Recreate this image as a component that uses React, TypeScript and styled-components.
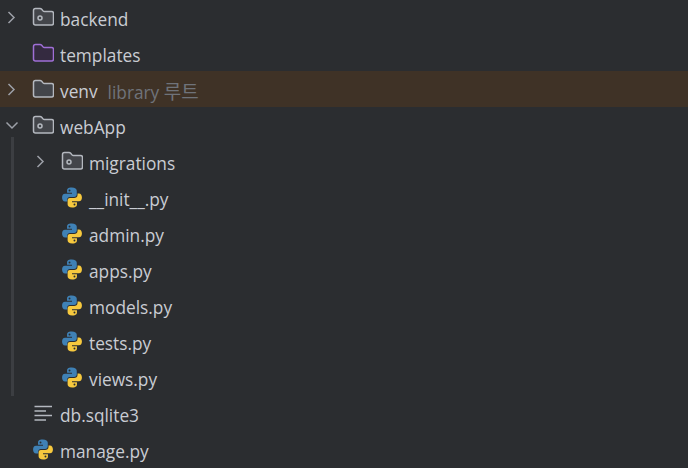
import { createGlobalStyle, styled } from 'styled-components';

const GlobalStyle = createGlobalStyle`
  html, body {
    margin: 0;
    height: 100%;
    overflow: hidden;
    background: #2b2d30;
  }
`;

type IconKind = 'package' | 'folder' | 'templates' | 'python' | 'text';

const Chevron = ({ open }: { open: boolean }) => (
  <StChevron width="16" height="16" viewBox="0 0 16 16" fill="none" stroke="#9da0a8" strokeWidth="1.5">
    {open ? <path d="M3.5 5.5 L9 11 L14.5 5.5" /> : <path d="M5.5 3 L11 8.5 L5.5 14" />}
  </StChevron>
);

const FolderIcon = ({ color, fill, dot }: { color: string; fill: string; dot?: boolean }) => (
  <svg width="22" height="20" viewBox="0 0 22 20" fill="none">
    <path
      d="M1.5 3.5 Q1.5 1.5 3.5 1.5 H8 Q9 1.5 9.7 2.3 L11 3.9 Q11.5 4.5 12.5 4.5 H19.5 Q21.5 4.5 21.5 6.5 V16 Q21.5 18 19.5 18 H3.5 Q1.5 18 1.5 16 Z"
      fill={fill}
      stroke={color}
      strokeWidth="1.5"
    />
    {dot && <circle cx="8" cy="11" r="2" stroke={color} strokeWidth="1.5" />}
  </svg>
);

const PythonIcon = () => (
  <svg width="22" height="21" viewBox="0 0 22 22">
    <path
      d="M10.8 0.6 C6.4 0.6 5.8 2.4 5.8 4 V6 H11 V7 H3.8 C1.6 7 0.6 8.8 0.6 11 C0.6 13.4 1.6 15.2 3.8 15.2 H6 V13.2 C6 11.6 7.2 10.5 8.8 10.5 H13.2 C14.9 10.5 16 9.3 16 7.6 V4 C16 2 14.2 0.6 10.8 0.6 Z"
      fill="#3f81b5"
    />
    <circle cx="8.4" cy="3.6" r="1" fill="#2b2d30" />
    <path
      d="M11.2 21.4 C15.6 21.4 16.2 19.6 16.2 18 V16 H11 V15 H18.2 C20.4 15 21.4 13.2 21.4 11 C21.4 8.6 20.4 6.8 18.2 6.8 H16.8 V8.4 C16.8 10.4 15.2 11.5 13.2 11.5 H8.8 C7.1 11.5 6.4 12.7 6.4 14.4 V18 C6.4 20 7.8 21.4 11.2 21.4 Z"
      fill="#f7c93e"
    />
    <circle cx="13.6" cy="18.4" r="1" fill="#2b2d30" />
  </svg>
);

const TextIcon = () => (
  <svg width="20" height="16" viewBox="0 0 20 16" stroke="#b4b8bf" strokeWidth="1.6">
    <path d="M1.5 1.5 H19 M1.5 6 H13 M1.5 10.5 H19 M1.5 15 H13" />
  </svg>
);

const FileIcon = ({ kind }: { kind: IconKind }) => {
  if (kind === 'python') return <PythonIcon />;
  if (kind === 'text') return <TextIcon />;
  if (kind === 'templates') return <FolderIcon color="#9f6fd6" fill="#342a40" />;
  return <FolderIcon color="#b4b8bf" fill="#43454a" dot={kind === 'package'} />;
};

interface TreeRowProps {
  depth: number;
  name: string;
  icon: IconKind;
  arrow?: 'open' | 'closed';
  hint?: string;
  hintKo?: string;
  excluded?: boolean;
}

const TreeRow = ({ depth, name, icon, arrow, hint, hintKo, excluded }: TreeRowProps) => (
  <StRow $depth={depth} $excluded={excluded}>
    <StArrowSlot>{arrow && <Chevron open={arrow === 'open'} />}</StArrowSlot>
    <StIconSlot>
      <FileIcon kind={icon} />
    </StIconSlot>
    <StName>{name}</StName>
    {hint && (
      <StHint>
        {hint} <StHintKo>{hintKo}</StHintKo>
      </StHint>
    )}
  </StRow>
);

const App = () => (
  <>
    <GlobalStyle />
    <StTree>
      <TreeRow depth={0} name="backend" icon="package" arrow="closed" />
      <TreeRow depth={0} name="templates" icon="templates" />
      <TreeRow depth={0} name="venv" icon="folder" arrow="closed" hint="library" hintKo="루트" excluded />
      <TreeRow depth={0} name="webApp" icon="package" arrow="open" />
      <StGroup>
        <TreeRow depth={1} name="migrations" icon="package" arrow="closed" />
        <TreeRow depth={1} name="__init__.py" icon="python" />
        <TreeRow depth={1} name="admin.py" icon="python" />
        <TreeRow depth={1} name="apps.py" icon="python" />
        <TreeRow depth={1} name="models.py" icon="python" />
        <TreeRow depth={1} name="tests.py" icon="python" />
        <TreeRow depth={1} name="views.py" icon="python" />
      </StGroup>
      <TreeRow depth={0} name="db.sqlite3" icon="text" />
      <TreeRow depth={0} name="manage.py" icon="python" />
    </StTree>
  </>
);

export default App;

const StTree = styled.div`
  display: flex;
  flex-direction: column;

  width: 688px;
  height: 468px;

  box-sizing: border-box;
  overflow: hidden;
  background-color: #2b2d30;
  font-family: 'Open Sans', 'Noto Sans CJK KR', sans-serif;
  font-size: 17.3px;
`;

const StGroup = styled.div`
  display: flex;
  flex-direction: column;

  position: relative;

  &::before {
    content: '';
    position: absolute;
    top: -6px;
    bottom: -1px;
    left: 11px;
    width: 3px;
    background-color: #3c3e42;
  }
`;

const StRow = styled.div<{ $depth: number; $excluded?: boolean }>`
  display: flex;
  align-items: center;
  flex-shrink: 0;

  height: 36px;
  padding-left: ${({ $depth }) => 3 + $depth * 29}px;

  background-color: ${({ $excluded }) => ($excluded ? '#3f3226' : 'transparent')};

  &:first-child {
    margin-top: -1px;
  }

  ${StGroup} > &:first-child {
    margin-top: 0;
  }
`;

const StArrowSlot = styled.div`
  display: flex;
  justify-content: center;
  align-items: center;

  width: 16px;
  height: 16px;
  margin-right: 13px;
`;

const StChevron = styled.svg`
  display: block;
`;

const StIconSlot = styled.div`
  display: flex;
  justify-content: center;
  align-items: center;

  width: 22px;
  margin-right: 6px;
`;

const StName = styled.span`
  padding-top: 4px;

  color: #c9ccd3;
  white-space: nowrap;
`;

const StHint = styled.span`
  margin-left: 10px;
  padding-top: 4px;

  color: #6f737a;
  white-space: nowrap;
`;

const StHintKo = styled.span`
  font-size: 19px;
`;
